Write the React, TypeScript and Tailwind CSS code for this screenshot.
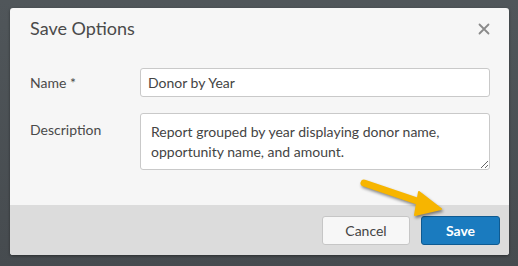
import React from "react";

export default function App() {
  return (
    <div
      className="relative w-[518px] h-[266px] pt-[8px] pl-[10px] bg-gradient-to-b from-[#50565a] to-[#464b4f]"
      style={{ fontFamily: "Lato, 'Noto Sans', sans-serif" }}
    >
      <div className="w-[499px] h-[247px] rounded-[3px] overflow-hidden flex flex-col bg-[#f6f6f6] shadow-[0_1px_3px_rgba(0,0,0,0.4)]">
        <div className="h-[40px] flex items-center justify-between pl-[20px] pr-[19px]">
          <span className="text-[18px] text-[#4a4a4a] leading-[24px]">Save Options</span>
          <svg width="12" height="12" viewBox="0 0 12 12" className="mt-[1px]">
            <path d="M1.5 1.5 L10.5 10.5 M10.5 1.5 L1.5 10.5" stroke="#8a8a8a" strokeWidth="1.8" strokeLinecap="round" />
          </svg>
        </div>
        <div className="flex-1 flex flex-col pt-[20px] pl-[20px] pr-[19px] gap-[16px]">
          <div className="flex items-center">
            <label className="w-[110px] text-[14px] text-[#4a4a4a]">Name *</label>
            <div className="flex-1 h-[29px] rounded-[3px] border border-[#c9c9c9] bg-white flex items-center pl-[7px] text-[14px] text-[#444]">
              Donor by Year
            </div>
          </div>
          <div className="flex items-start">
            <label className="w-[110px] text-[14px] text-[#4a4a4a] pt-[6px]">Description</label>
            <textarea
              className="flex-1 h-[57px] rounded-[3px] border border-[#c9c9c9] bg-white pl-[10px] pr-[8px] pt-[8px] text-[14px] leading-[20px] text-[#444] outline-none"
              style={{ fontFamily: "Lato, 'Noto Sans', sans-serif", resize: "both" }}
              defaultValue="Report grouped by year displaying donor name, opportunity name, and amount."
            />
          </div>
        </div>
        <div className="h-[50px] bg-[#dcdcdc] flex items-center justify-end pr-[9px] gap-[11px]">
          <button className="w-[88px] h-[29px] rounded-[3px] border border-[#c6c6c6] bg-[#f7f7f7] text-[14px] text-[#444]">
            Cancel
          </button>
          <button className="w-[79px] h-[29px] rounded-[3px] border border-[#0e5a91] bg-[#1a7bbf] text-[14px] font-bold text-white">
            Save
          </button>
        </div>
      </div>
      <svg
        className="absolute left-[355px] top-[175px]"
        width="95"
        height="50"
        viewBox="0 0 95 50"
        style={{ filter: "drop-shadow(1px 2px 1.5px rgba(0,0,0,0.45))" }}
      >
        <path d="M9 8 L68 28" stroke="#f7b500" strokeWidth="7" strokeLinecap="round" />
        <path d="M64 17 L86 34 L60 40 Z" fill="#f7b500" stroke="#f7b500" strokeWidth="2" strokeLinejoin="round" />
      </svg>
    </div>
  );
}
